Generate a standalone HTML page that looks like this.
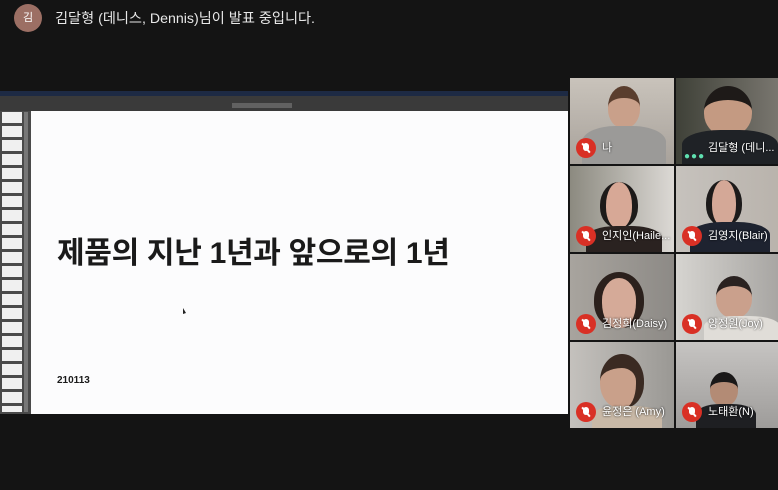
<!DOCTYPE html>
<html><head><meta charset="utf-8"><style>
*{margin:0;padding:0;box-sizing:border-box}
body{width:778px;height:490px;background:#141414;position:relative;overflow:hidden;font-family:"Liberation Sans","Noto Sans CJK KR",sans-serif}
.abs{position:absolute}
.tile{position:absolute;width:104px;height:86px;overflow:hidden}
.mic{position:absolute;left:6px;bottom:6px;width:20px;height:20px;border-radius:50%;background:#d93025}
.mic:after{content:"";position:absolute;left:9px;top:4px;width:2px;height:12px;background:#fff;transform:rotate(-40deg)}
.mic:before{content:"";position:absolute;left:7px;top:5px;width:6px;height:8px;border-radius:3px;background:#fff}
.nm{position:absolute;left:32px;bottom:9px;color:#fff;font-size:11px;white-space:nowrap;text-shadow:0 0 2px #000}
.head{position:absolute;border-radius:50% 50% 45% 45%}
.body{position:absolute;border-radius:40% 40% 0 0}
</style></head><body>
<div class="abs" style="left:14px;top:4px;width:28px;height:28px;border-radius:50%;background:#9c6f64;color:#fff;font-size:11px;text-align:center;line-height:28px">김</div>
<div class="abs" style="left:55px;top:8px;color:#e8e8e8;font-size:14.2px">김달형 (데니스, Dennis)님이 발표 중입니다.</div>

<div class="abs" style="left:0;top:91px;width:568px;height:5px;background:#1d2a44"></div>
<div class="abs" style="left:0;top:96px;width:568px;height:15px;background:#3a3a3a"></div>
<div class="abs" style="left:232px;top:103px;width:60px;height:5px;background:#888;opacity:.5"></div>
<div class="abs" style="left:0;top:111px;width:31px;height:303px;background:#4a4a4a"></div>
<div class="abs" style="left:2px;top:112px;width:20px;height:300px;background:repeating-linear-gradient(#f0f0f0 0 11px,#4a4a4a 11px 14px)"></div>
<div class="abs" style="left:24px;top:112px;width:4px;height:300px;background:#777"></div>
<div class="abs" style="left:31px;top:111px;width:537px;height:303px;background:#fcfcfd"></div>
<div class="abs" style="left:57px;top:228px;font-size:30px;font-weight:bold;color:#1a1a1a;letter-spacing:-0.3px">제품의 지난 1년과 앞으로의 1년</div>
<div class="abs" style="left:57px;top:375px;font-size:10px;font-weight:bold;color:#1a1a1a">210113</div>
<div class="abs" style="left:183px;top:308px;width:0;height:0;border-left:3px solid #222;border-top:5px solid transparent;border-bottom:1px solid transparent"></div>

<div class="tile" style="left:570px;top:78px;background:linear-gradient(#c9c3bb,#a8a29b)">
<div class="head" style="left:38px;top:8px;width:32px;height:42px;background:#c9a08a;border-top:12px solid #5a3e2e"></div>
<div class="body" style="left:12px;top:48px;width:84px;height:40px;background:#9b9a98"></div>
<div class="mic"></div><div class="nm">나</div></div>
<div class="tile" style="left:676px;top:78px;background:linear-gradient(90deg,#3f4138,#7a7770)">
<div class="head" style="left:28px;top:8px;width:48px;height:50px;background:#c49a82;border-top:14px solid #1e1a18"></div>
<div class="body" style="left:6px;top:52px;width:96px;height:36px;background:#1f2226"></div>
<div class="abs" style="left:8px;top:73px;color:#5fe0b0;font-size:10px;letter-spacing:1px">●●●</div><div class="nm">김달형 (데니...</div></div>

<div class="tile" style="left:570px;top:166px;background:linear-gradient(90deg,#8c8a80,#dcd9d5)">
<div class="head" style="left:30px;top:16px;width:38px;height:46px;background:#d7a896;border-left:6px solid #1d1a19;border-right:6px solid #1d1a19"></div>
<div class="body" style="left:16px;top:60px;width:76px;height:30px;background:#2a2220"></div>
<div class="mic"></div><div class="nm">인지인(Haile...</div></div>
<div class="tile" style="left:676px;top:166px;background:linear-gradient(90deg,#c6c2bd,#b9b3ac)">
<div class="head" style="left:30px;top:14px;width:36px;height:46px;background:#d4a897;border-left:6px solid #1c1a1a;border-right:6px solid #1c1a1a"></div>
<div class="body" style="left:14px;top:56px;width:80px;height:32px;background:#1e2330"></div>
<div class="mic"></div><div class="nm">김영지(Blair)</div></div>

<div class="tile" style="left:570px;top:254px;background:linear-gradient(90deg,#a8a49e,#8d8a86)">
<div class="head" style="left:24px;top:18px;width:50px;height:56px;background:#d5aa98;border-left:8px solid #2b201c;border-right:8px solid #2b201c;border-top:6px solid #2b201c"></div>
<div class="mic"></div><div class="nm">김정희(Daisy)</div></div>
<div class="tile" style="left:676px;top:254px;background:linear-gradient(90deg,#d6d4d0,#a7a5a2)">
<div class="head" style="left:40px;top:22px;width:36px;height:42px;background:#caa08c;border-top:10px solid #2a2220"></div>
<div class="body" style="left:28px;top:62px;width:76px;height:26px;background:#e0ddd8"></div>
<div class="mic"></div><div class="nm">양정원(Joy)</div></div>

<div class="tile" style="left:570px;top:342px;background:linear-gradient(90deg,#c4c1bd,#9a9894)">
<div class="head" style="left:30px;top:12px;width:44px;height:54px;background:#c9a08a;border-top:14px solid #3a2a22;border-right:8px solid #3a2a22"></div>
<div class="body" style="left:22px;top:64px;width:70px;height:24px;background:#c8b8a6"></div>
<div class="mic"></div><div class="nm">윤정은 (Amy)</div></div>
<div class="tile" style="left:676px;top:342px;background:linear-gradient(#c6c4c2,#9e9c9a)">
<div class="head" style="left:34px;top:30px;width:28px;height:34px;background:#b38b75;border-top:10px solid #1a1818"></div>
<div class="body" style="left:20px;top:62px;width:60px;height:26px;background:#1e1f22"></div>
<div class="mic"></div><div class="nm">노태환(N)</div></div>
</body></html>
